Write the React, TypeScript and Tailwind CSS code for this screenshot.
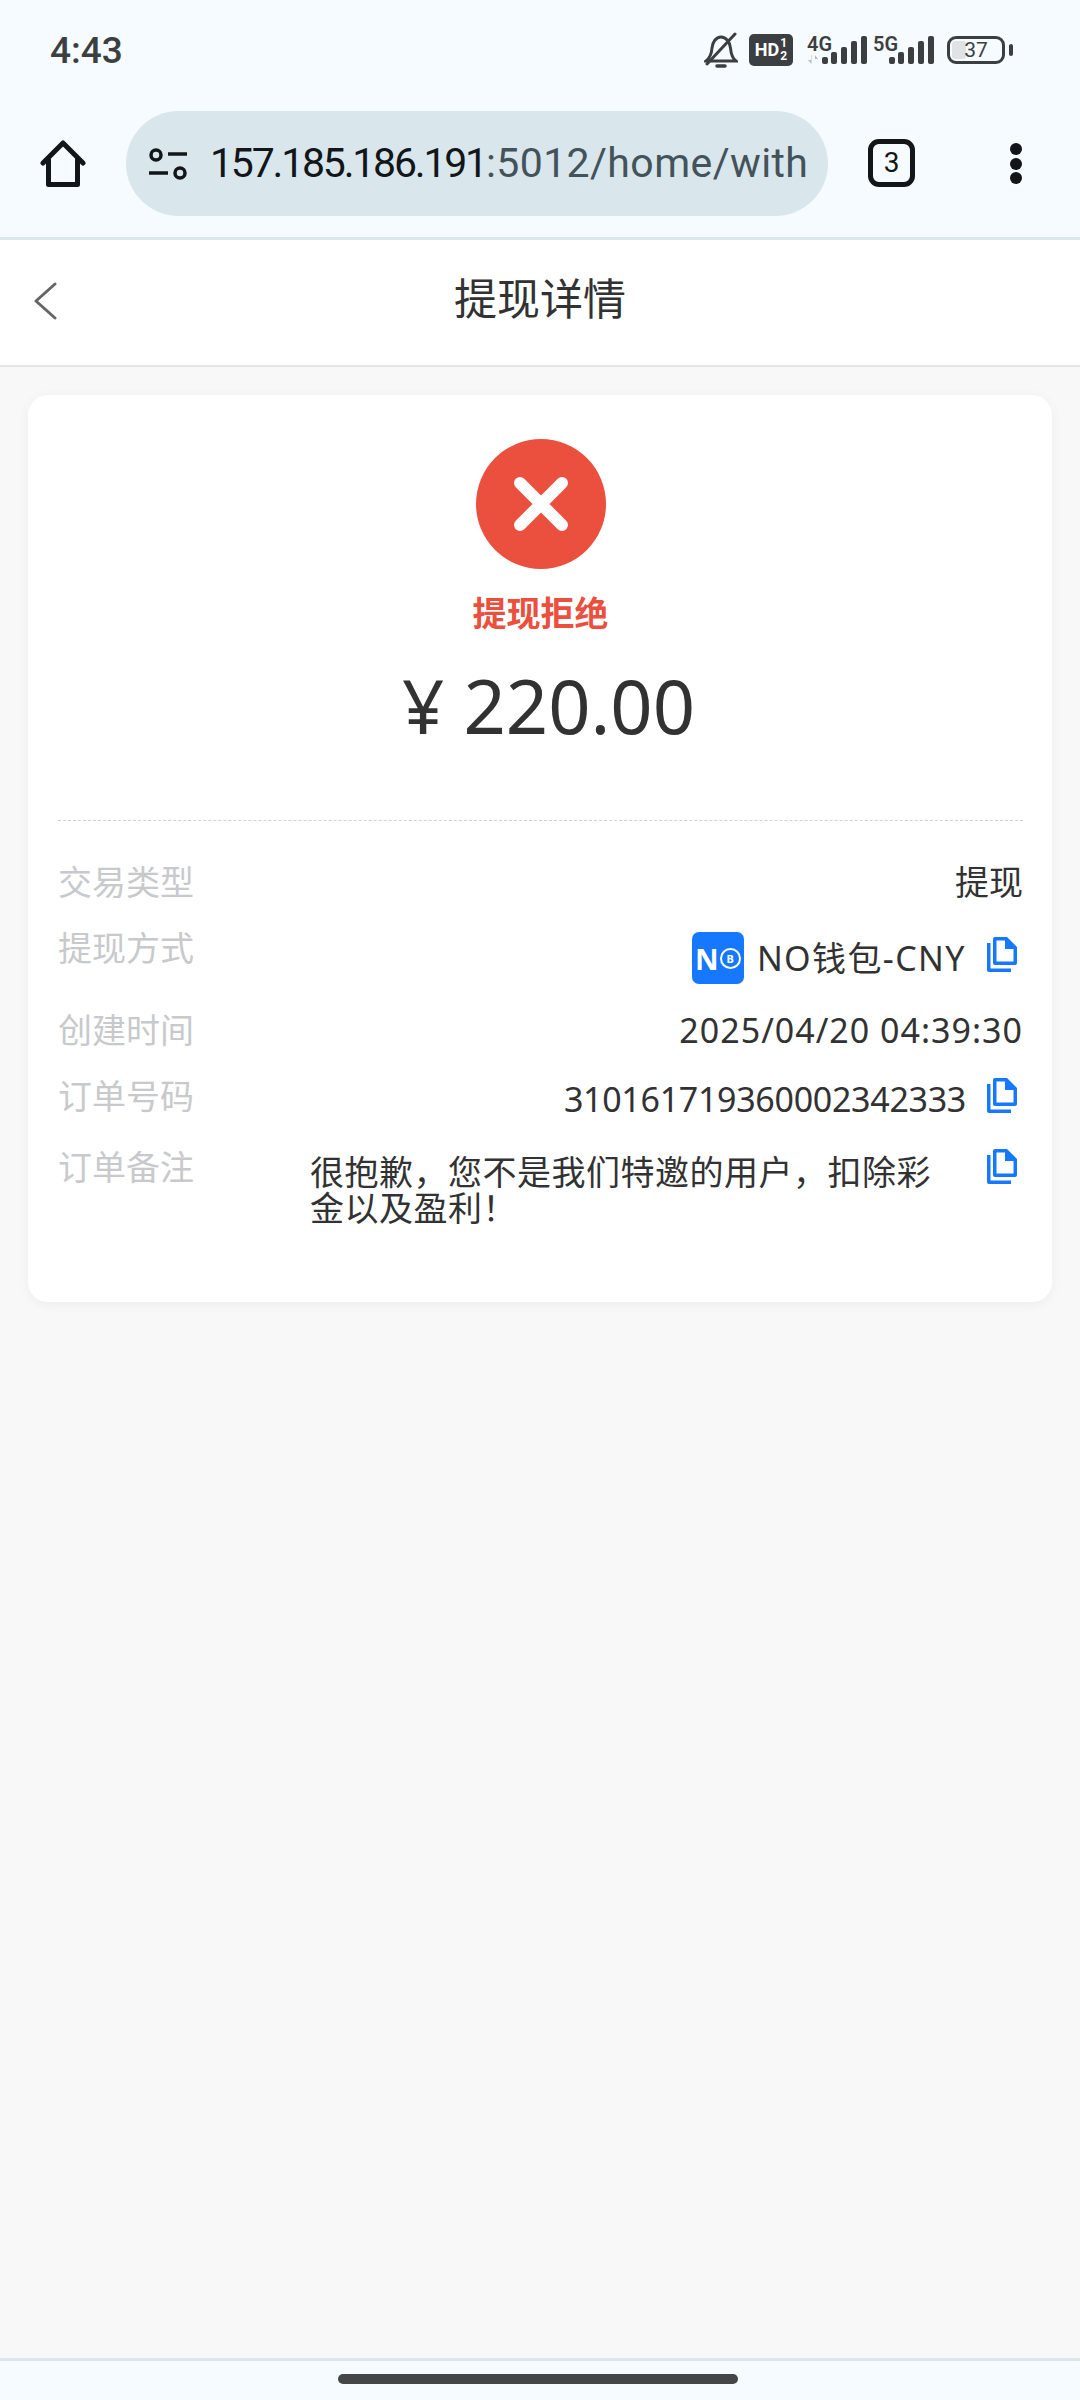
const CopyIcon = () => (
    <svg width="30" height="35" viewBox="0 0 30 35" className="shrink-0">
        <path d="M8 0h12l10 10v16a2 2 0 0 1-2 2H8a2 2 0 0 1-2-2V2a2 2 0 0 1 2-2z" fill="#1677ff" />
        <path d="M9.500 3.500h8.500V12h8.500v12.500h-17z" fill="#fff" />
        <path d="M0 6h3.500v25.500H24V35H2a2 2 0 0 1-2-2z" fill="#1677ff" />
    </svg>
)

const Signal = () => (
    <svg width="45" height="28" viewBox="0 0 45 28">
        <rect x="0" y="21" width="6" height="7" rx="2" fill="#3c3f41" />
        <rect x="9" y="16" width="6" height="12" rx="2" fill="#3c3f41" />
        <rect x="19" y="11" width="6" height="17" rx="2" fill="#3c3f41" />
        <rect x="29" y="5" width="6" height="23" rx="2" fill="#3c3f41" />
        <rect x="39" y="0" width="6" height="28" rx="2" fill="#3c3f41" />
    </svg>
)

const StatusBar = () => (
    <div className='flex h-[110px] items-center justify-between pb-[10px] pl-[50px] pr-[67px] font-["Roboto",sans-serif]'>
        <span className="text-[37px] leading-none font-medium text-[#3c3f41]">4:43</span>
        <div className="flex items-center">
            <svg width="34" height="36" viewBox="0 0 34 36" fill="none" stroke="#3c3f41" strokeWidth="3" strokeLinecap="round">
                <path d="M2 29h30c-4-3-5-7-5.500-13C26 10 22 5 17 5 12 5 8.500 10 8 16c-.5 6-2 10-6 13z" />
                <path d="M31 2 3 32" />
                <path d="M13 34h8" strokeWidth="3.500" />
            </svg>
            <div className="ml-[11px] flex h-[32px] w-[44px] items-center justify-center gap-[1px] rounded-[5px] bg-[#3c3f41] text-white">
                <span className="text-[18px] leading-none font-bold">HD</span>
                <span className="flex flex-col text-[12px] leading-[13px] font-bold">
                    <span>1</span>
                    <span>2</span>
                </span>
            </div>
            <div className="relative ml-[14px] h-[32px] w-[60px]">
                <span className="absolute left-0 top-0 text-[20px] leading-none font-semibold text-[#3c3f41]">4G</span>
                <svg className="absolute bottom-[2px] left-0" width="13" height="9" viewBox="0 0 13 9" fill="#b9bcbe">
                    <path d="M4 0v5H1l3.500 4V0zM8 9V4h3L8 0z" />
                </svg>
                <div className="absolute bottom-[2px] right-0">
                    <Signal />
                </div>
            </div>
            <div className="relative ml-[6px] h-[32px] w-[61px]">
                <span className="absolute left-0 top-0 text-[20px] leading-none font-semibold text-[#3c3f41]">5G</span>
                <div className="absolute bottom-[2px] right-0">
                    <Signal />
                </div>
            </div>
            <div className="ml-[13px] flex items-center gap-[4px]">
                <div className="relative flex h-[28px] w-[58px] items-center justify-center overflow-hidden rounded-[9px] border-[3px] border-[#3c3f41]">
                    <div className="absolute inset-y-[2px] left-[2px] w-[14px] rounded-[3px] bg-[#dfe3e4]" />
                    <span className="relative text-[21px] leading-none text-[#3c3f41]">37</span>
                </div>
                <div className="h-[12px] w-[4px] rounded-full bg-[#3c3f41]" />
            </div>
        </div>
    </div>
)

const BrowserBar = () => (
    <div className='flex h-[130px] items-start border-b-[3px] border-[#dbe7ea] font-["Roboto",sans-serif]'>
        <div className="ml-[40px] mt-[30px]">
            <svg width="46" height="47" viewBox="0 0 46 47" fill="none" stroke="#121619" strokeWidth="5" strokeLinecap="round" strokeLinejoin="round">
                <path d="M3 23 23 3l20 20" />
                <path d="M8.500 20v24.500H37.500V20" />
            </svg>
        </div>
        <div className="ml-[40px] mt-[1px] flex h-[105px] w-[702px] items-center rounded-full bg-[#d9e7ec] pl-[23px] pr-[20px]">
            <svg width="38" height="32" viewBox="0 0 38 32" fill="none" stroke="#121619" strokeWidth="3.500" className="shrink-0">
                <circle cx="7" cy="7" r="5" />
                <path d="M19 6h19" />
                <path d="M0 25h19" />
                <circle cx="31" cy="25" r="5" />
            </svg>
            <div className="ml-[23px] overflow-hidden whitespace-nowrap text-[41px] leading-none">
                <span className="tracking-[-2.2px] text-[#121619]">157.185.186.191</span>
                <span className="tracking-[0.4px] text-[#44525a]">:5012/home/withdraw</span>
            </div>
        </div>
        <div className="ml-[40px] mt-[29px] flex h-[48px] w-[47px] items-center justify-center rounded-[11px] border-[5px] border-[#121619] text-[28px] leading-none text-[#121619]">
            3
        </div>
        <div className="ml-[95px] mt-[33px] flex h-[41px] flex-col justify-between">
            <div className="h-[12px] w-[12px] rounded-full bg-[#121619]" />
            <div className="h-[12px] w-[12px] rounded-full bg-[#121619]" />
            <div className="h-[12px] w-[12px] rounded-full bg-[#121619]" />
        </div>
    </div>
)

const Row = ({ label, children, className }: { label: string; children: React.ReactNode; className?: string }) => (
    <div className={`flex items-start justify-between ${className ?? ''}`}>
        <span className="shrink-0 text-[#c8c9cc]">{label}</span>
        {children}
    </div>
)

export default function App() {
    return (
        <div className='flex h-[2400px] w-[1080px] flex-col overflow-hidden bg-[#f8f8f8] font-["Noto_Sans","Noto_Sans_CJK_SC",sans-serif]'>
            <div className="bg-[#f5fbfe]">
                <StatusBar />
                <BrowserBar />
            </div>

            <div className="relative flex h-[127px] items-center justify-center border-b-[2px] border-[#e6e6e6] bg-white pb-[8px]">
                <svg className="absolute left-[33px] top-[42px]" width="24" height="38" viewBox="0 0 24 38" fill="none" stroke="#666" strokeWidth="3" strokeLinecap="round" strokeLinejoin="round">
                    <path d="M22 2 3 19l19 17" />
                </svg>
                <span className="text-[43px] leading-none text-[#323233]">提现详情</span>
            </div>

            <div className="mx-[28px] mt-[28px] flex h-[907px] flex-col rounded-[20px] bg-white pl-[30px] pr-[29px] pt-[44px] shadow-[0_2px_12px_rgba(0,0,0,0.05)]">
                <div className="flex flex-col items-center">
                    <div className="flex h-[130px] w-[130px] items-center justify-center rounded-full bg-[#eb4f3d]">
                        <svg width="54" height="54" viewBox="0 0 54 54" stroke="#fff" strokeWidth="12" strokeLinecap="round">
                            <path d="M6 6l42 42M48 6 6 48" />
                        </svg>
                    </div>
                    <div className="mt-[24px] text-[34px] leading-[40px] font-bold text-[#eb4f3d]">提现拒绝</div>
                    <div className="mt-[31px] pl-[16px] text-[74px] leading-[84px] text-[#323233]">¥ 220.00</div>
                </div>

                <div className="mt-[72px] flex flex-col gap-[26px] border-t-[1px] border-dashed border-[#cfd1d3] pt-[41px] text-[34px] leading-[40px] text-[#323233]">
                    <Row label="交易类型">
                        <span>提现</span>
                    </Row>
                    <Row label="提现方式" className="h-[56px]">
                        <div className="mt-[4px] flex items-start">
                            <div className="flex h-[52px] w-[52px] items-center justify-center gap-[1px] rounded-[7px] bg-[#1677ff] text-white">
                                <span className="text-[29px] leading-none font-bold">N</span>
                                <span className="flex h-[21px] w-[21px] items-center justify-center rounded-full border-[2px] border-white text-[11px] leading-none font-bold">B</span>
                            </div>
                            <span className="ml-[13px] mt-[6px] tracking-[1.4px]">NO钱包-CNY</span>
                            <span className="ml-[21px] mr-[6px] mt-[5px]">
                                <CopyIcon />
                            </span>
                        </div>
                    </Row>
                    <Row label="创建时间">
                        <span className="tracking-[1px]">2025/04/20 04:39:30</span>
                    </Row>
                    <Row label="订单号码" className="h-[45px]">
                        <div className="flex items-start">
                            <span className="mt-[3px] tracking-[-0.3px]">310161719360002342333</span>
                            <span className="ml-[21px] mr-[6px] mt-[2px]">
                                <CopyIcon />
                            </span>
                        </div>
                    </Row>
                    <Row label="订单备注">
                        <div className="flex items-start">
                            <p className="mt-[7px] w-[643px] text-[34px] leading-[36px] tracking-[0.5px]">很抱歉，您不是我们特邀的用户，扣除彩金以及盈利！</p>
                            <span className="ml-[34px] mr-[6px] mt-[2px]">
                                <CopyIcon />
                            </span>
                        </div>
                    </Row>
                </div>
            </div>

            <div className="mt-auto flex h-[42px] items-start justify-center border-t-[3px] border-[#dde6e8] bg-[#f5fbfe] pr-[4px] pt-[13px]">
                <div className="h-[10px] w-[400px] rounded-full bg-[#444746]" />
            </div>
        </div>
    )
}
